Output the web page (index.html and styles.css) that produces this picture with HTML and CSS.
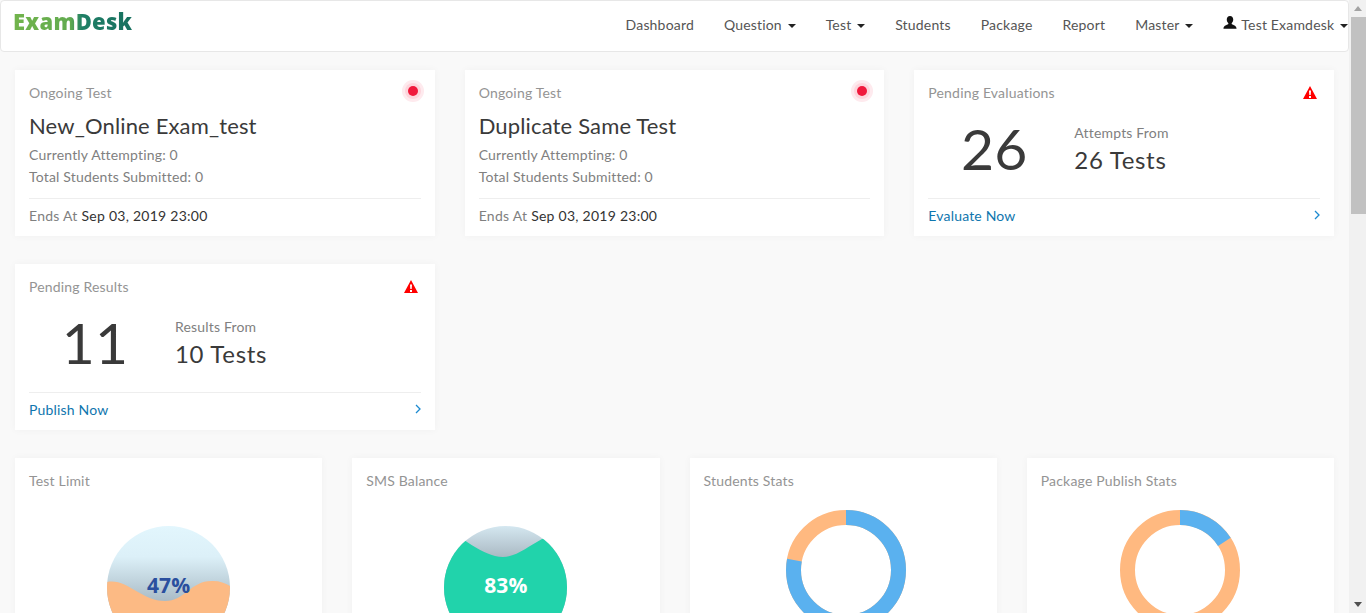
FILE: index.html
```html
<!DOCTYPE html>
<html lang="en">
<head>
    <meta charset="UTF-8">
    <meta name="viewport" content="width=device-width, initial-scale=1.0">
    <title>ExamDesk Dashboard</title>
    <link rel="stylesheet" href="styles.css">
</head>
<body>
    <nav class="navbar">
        <a class="brand" href="#">ExamDesk</a>
        <ul class="nav-links">
            <li>Dashboard</li>
            <li>Question <span class="caret"></span></li>
            <li>Test <span class="caret"></span></li>
            <li>Students</li>
            <li>Package</li>
            <li>Report</li>
            <li>Master <span class="caret"></span></li>
            <li class="nav-user">
                <svg class="user-icon" viewBox="0 0 16 16"><path d="M8 0C5.6 0 4.3 1.8 4.3 4.1c0 1.5.6 3 1.6 4 .3.4.4 1-.1 1.4C4.3 10.500 .8 10.800.5 14.600h15c-.3-3.800-3.800-4.100-5.300-5.100-.5-.4-.4-1-.1-1.400 1-1 1.600-2.500 1.600-4C11.700 1.800 10.400 0 8 0z"/></svg>
                Test Examdesk <span class="caret"></span>
            </li>
        </ul>
    </nav>

    <main class="content">
        <section class="row-3">
            <div class="card">
                <div class="card-head">Ongoing Test <span class="live-dot"></span></div>
                <h2 class="test-name">New_Online Exam_test</h2>
                <p class="meta">Currently Attempting: 0</p>
                <p class="meta">Total Students Submitted: 0</p>
                <div class="card-foot">Ends At <span class="dark">Sep 03, 2019 23:00</span></div>
            </div>
            <div class="card">
                <div class="card-head">Ongoing Test <span class="live-dot"></span></div>
                <h2 class="test-name">Duplicate Same Test</h2>
                <p class="meta">Currently Attempting: 0</p>
                <p class="meta">Total Students Submitted: 0</p>
                <div class="card-foot">Ends At <span class="dark">Sep 03, 2019 23:00</span></div>
            </div>
            <div class="card">
                <div class="card-head">Pending Evaluations
                    <svg class="warn" viewBox="0 0 14 13"><path fill-rule="evenodd" d="M7 0l7 13H0zM6 4.500l.3 4.500h1.400L8 4.500zM6 10v2h2v-2z"/></svg>
                </div>
                <div class="stat">
                    <div class="stat-num">26</div>
                    <div class="stat-text">
                        <div class="stat-label">Attempts From</div>
                        <div class="stat-value">26 Tests</div>
                    </div>
                </div>
                <div class="card-foot link-foot"><a href="#">Evaluate Now</a>
                    <svg class="chevron" viewBox="0 0 6 10"><path d="M1 1l4 4-4 4"/></svg>
                </div>
            </div>
        </section>

        <section class="row-3">
            <div class="card">
                <div class="card-head">Pending Results
                    <svg class="warn" viewBox="0 0 14 13"><path fill-rule="evenodd" d="M7 0l7 13H0zM6 4.500l.3 4.500h1.400L8 4.500zM6 10v2h2v-2z"/></svg>
                </div>
                <div class="stat">
                    <div class="stat-num">11</div>
                    <div class="stat-text">
                        <div class="stat-label">Results From</div>
                        <div class="stat-value">10 Tests</div>
                    </div>
                </div>
                <div class="card-foot link-foot"><a href="#">Publish Now</a>
                    <svg class="chevron" viewBox="0 0 6 10"><path d="M1 1l4 4-4 4"/></svg>
                </div>
            </div>
        </section>

        <section class="row-4">
            <div class="card chart-card">
                <div class="card-head">Test Limit</div>
                <div class="liquid">
                    <svg viewBox="0 0 123 123">
                        <defs>
                            <linearGradient id="skyA" x1="0" y1="0" x2="0" y2="1">
                                <stop offset="0" stop-color="#e2f6fd"/>
                                <stop offset="0.25" stop-color="#dcf0f8"/>
                                <stop offset="0.62" stop-color="#a8bac5"/>
                            </linearGradient>
                            <clipPath id="ball"><circle cx="61.500" cy="61.500" r="61.500"/></clipPath>
                        </defs>
                        <g clip-path="url(#ball)">
                            <rect width="123" height="123" fill="url(#skyA)"/>
                            <path fill="#fcba84" d="M0 56C20 52 34 75 58 75 78 75 84 54 106 55 113 55 118 57 123 60V123H0z"/>
                        </g>
                    </svg>
                    <span class="liquid-text blue">47%</span>
                </div>
            </div>
            <div class="card chart-card">
                <div class="card-head">SMS Balance</div>
                <div class="liquid">
                    <svg viewBox="0 0 123 123">
                        <defs>
                            <linearGradient id="skyB" x1="0" y1="0" x2="0" y2="1">
                                <stop offset="0" stop-color="#d4e7f0"/>
                                <stop offset="0.26" stop-color="#a9b8c2"/>
                            </linearGradient>
                        </defs>
                        <g clip-path="url(#ball)">
                            <rect width="123" height="123" fill="url(#skyB)"/>
                            <path fill="#21d3ab" d="M0 3C16 8 38 31 59 31 72 31 85 20 98 13 108 8 115 5 123 3V123H0z"/>
                        </g>
                    </svg>
                    <span class="liquid-text">83%</span>
                </div>
            </div>
            <div class="card chart-card">
                <div class="card-head">Students Stats</div>
                <svg class="donut donut-students" viewBox="0 0 120 120">
                    <circle class="ring ring-orange" cx="60" cy="60" r="52.500" pathLength="100"/>
                    <circle class="ring ring-blue" cx="60" cy="60" r="52.500" pathLength="100" stroke-dasharray="78 22"/>
                </svg>
            </div>
            <div class="card chart-card">
                <div class="card-head">Package Publish Stats</div>
                <svg class="donut" viewBox="0 0 120 120">
                    <circle class="ring ring-orange" cx="60" cy="60" r="52.500" pathLength="100"/>
                    <circle class="ring ring-blue" cx="60" cy="60" r="52.500" pathLength="100" stroke-dasharray="16 84"/>
                </svg>
            </div>
        </section>
    </main>

    <div class="scrollbar">
        <span class="arrow-up"></span>
        <span class="thumb"></span>
        <span class="arrow-down"></span>
    </div>
</body>
</html>
```

FILE: styles.css
```css
body {
    margin: 0 17px 0 0;
    min-height: 1802px;
    background: #f9f9f9;
    color: #333;
    font-family: "Lato", "Open Sans", sans-serif;
    font-size: 14px;
    letter-spacing: 0.18px;
}

/* browser scrollbar from the screenshot */
.scrollbar {
    position: fixed;
    top: 0;
    right: 0;
    bottom: 0;
    display: flex;
    flex-direction: column;
    align-items: center;
    width: 17px;
    background: #f1f1f1;
}

.thumb {
    align-self: stretch;
    height: 197px;
    margin: 6px 0 0 2px;
    background: #c1c1c1;
}

.arrow-up {
    margin-top: 6px;
    border-bottom: 5px solid #a3a3a3;
    border-left: 4px solid transparent;
    border-right: 4px solid transparent;
}

.arrow-down {
    margin-top: auto;
    margin-bottom: 6px;
    border-top: 5px solid #505050;
    border-left: 4px solid transparent;
    border-right: 4px solid transparent;
}

.navbar {
    display: flex;
    justify-content: space-between;
    align-items: center;
    height: 50px;
    background: #fff;
    border: 1px solid #e7e7e7;
    border-radius: 4px;
}

.brand {
    margin: -11px 0 0 12px;
    font-family: "Open Sans", sans-serif;
    font-size: 22px;
    font-weight: 800;
    letter-spacing: 0.25px;
    text-decoration: none;
    color: transparent;
    background: linear-gradient(90deg, #72b44c 0%, #62ab4f 48%, #1f7f66 58%, #17705f 100%);
    -webkit-background-clip: text;
    background-clip: text;
}

.nav-links {
    display: flex;
    margin: -4px 0 0;
    padding: 0;
    list-style: none;
    color: #555;
}

.nav-links li {
    padding: 0 15px;
    white-space: nowrap;
}

.nav-links .nav-user {
    padding-right: 0;
}

.caret {
    display: inline-block;
    width: 0;
    height: 0;
    margin-left: 2px;
    vertical-align: middle;
    border-top: 4px solid #222;
    border-left: 4px solid transparent;
    border-right: 4px solid transparent;
}

.user-icon {
    width: 14px;
    height: 14px;
    margin-right: 1px;
    fill: #111;
}

.content {
    padding: 18px 15px 0;
}

.row-3 {
    display: grid;
    grid-template-columns: repeat(3, 1fr);
    column-gap: 30px;
    margin-bottom: 28px;
}

.row-4 {
    display: grid;
    grid-template-columns: repeat(4, 1fr);
    column-gap: 30px;
}

.card {
    display: flex;
    flex-direction: column;
    height: 166px;
    box-sizing: border-box;
    padding: 13px 14px 10px;
    background: #fff;
    box-shadow: 0 0 8px rgba(0, 0, 0, 0.04);
}

.card-head {
    position: relative;
    line-height: 20px;
    color: #949494;
}

.live-dot {
    position: absolute;
    top: 3px;
    right: 3px;
    width: 10px;
    height: 10px;
    border-radius: 50%;
    background: #f0193c;
    box-shadow: 0 0 0 3px #fdd5dc, 0 0 0 6px #feeaee;
}

.warn {
    position: absolute;
    top: 3px;
    right: 3px;
    width: 14px;
    height: 13px;
    fill: #f00;
}

.test-name {
    margin: 8px 0 3px;
    font-size: 22px;
    font-weight: 400;
    line-height: 30px;
    letter-spacing: 0.15px;
    color: #3a3a3a;
}

.meta {
    margin: 0;
    line-height: 22px;
    color: #808080;
}

.card-foot {
    margin-top: auto;
    padding-top: 7px;
    line-height: 20px;
    letter-spacing: 0.26px;
    color: #808080;
    border-top: 1px solid #eee;
}

.dark {
    color: #333;
}

.link-foot {
    display: flex;
    justify-content: space-between;
    align-items: center;
    letter-spacing: 0.18px;
}

.link-foot a {
    color: #0f76ae;
    text-decoration: none;
}

.chevron {
    width: 6px;
    height: 10px;
    margin: -2px 0 0 0;
    fill: none;
    stroke: #1c8ad0;
    stroke-width: 1.300;
}

.stat {
    display: grid;
    grid-template-columns: 132px 1fr;
    column-gap: 14px;
    align-items: center;
    flex: 1;
    margin-bottom: 6px;
}

.stat-num {
    text-align: center;
    font-size: 57px;
    line-height: 60px;
    color: #3a3a3a;
}

.stat-text {
    padding-top: 4px;
}

.stat-label {
    line-height: 20px;
    color: #808080;
}

.stat-value {
    margin-top: 1px;
    font-size: 24px;
    line-height: 32px;
    letter-spacing: 0.7px;
    color: #3a3a3a;
}

.chart-card {
    height: 330px;
}

.liquid {
    position: relative;
    width: 123px;
    height: 123px;
    margin: 35px auto 0;
}

.liquid svg {
    display: block;
}

.liquid-text {
    position: absolute;
    top: 45px;
    left: 0;
    right: 0;
    text-align: center;
    font-family: "Open Sans", sans-serif;
    font-size: 21px;
    font-weight: 700;
    line-height: 28px;
    color: #fff;
}

.liquid-text.blue {
    color: #2a4f9e;
}

.donut {
    display: block;
    width: 120px;
    height: 120px;
    margin: 19px auto 0;
    transform: rotate(-90deg);
}

.donut-students {
    margin-left: 82.500px;
}

.ring {
    fill: none;
    stroke-width: 15;
}

.ring-blue {
    stroke: #5ab1ef;
}

.ring-orange {
    stroke: #ffb980;
}
```
